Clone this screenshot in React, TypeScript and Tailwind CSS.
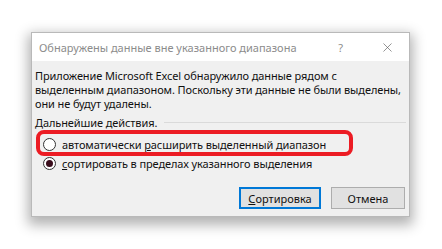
import { X } from 'lucide-react';

function Radio({ checked }: { checked?: boolean }) {
  return (
    <span className="w-[13px] h-[13px] rounded-full border border-[#333] bg-white flex items-center justify-center flex-shrink-0">
      {checked && <span className="w-[7px] h-[7px] rounded-full bg-[#3a0d1c]" />}
    </span>
  );
}

export default function App() {
  return (
    <div
      className="w-[442px] h-[249px] bg-white pt-[32px] pl-[31px] text-[11px] leading-[13px] text-[#111]"
      style={{ fontFamily: '"Noto Sans", "Open Sans", sans-serif' }}
    >
      <div className="w-[379px] h-[185px] border border-[#b9b9b9] bg-[#f0f0f0] shadow-[0_5px_12px_3px_rgba(0,0,0,0.3)] flex flex-col">
        <div className="h-[28px] bg-white flex items-center pl-[7px] pr-[14px] text-[#8c8c8c] flex-shrink-0">
          <span className="flex-1 whitespace-nowrap">Обнаружены данные вне указанного диапазона</span>
          <span className="mr-[37px]">?</span>
          <X size={15} strokeWidth={1} className="text-[#555]" />
        </div>

        <div className="pl-[3px] pt-[8px] tracking-[-0.1px]">
          <div className="leading-[14px]">
            <p className="whitespace-nowrap">Приложение Microsoft Excel обнаружило данные рядом с</p>
            <p className="whitespace-nowrap">выделенным диапазоном. Поскольку эти данные не были выделены,</p>
            <p className="whitespace-nowrap">они не будут удалены.</p>
          </div>

          <div className="mt-[5px] flex items-center gap-[7px] pr-[3px]">
            <span className="whitespace-nowrap">Дальнейшие действия.</span>
            <span className="flex-1 h-px bg-[#dadada]" />
          </div>

          <div className="relative mt-[6px] h-[18px] pl-[8px] flex items-center gap-[6px]">
            <span className="absolute left-[1px] top-[-5px] w-[317px] h-[26px] border-4 border-[#ec1c24] rounded-[8px]" />
            <Radio />
            <span className="whitespace-nowrap">
              автоматически <span className="underline">р</span>асширить выделенный диапазон
            </span>
          </div>

          <div className="mt-[1px] h-[18px] pl-[8px] flex items-center gap-[6px]">
            <Radio checked />
            <span className="whitespace-nowrap">
              <span className="underline">с</span>ортировать в пределах указанного выделения
            </span>
          </div>
        </div>

        <div className="flex justify-end gap-[10px] pr-[4px] mt-[15px]">
          <button className="w-[82px] h-[22px] border-2 border-[#0078d7] bg-[#e1e1e1] flex items-center justify-center">
            <span>
              <span className="underline">С</span>ортировка
            </span>
          </button>
          <button className="w-[74px] h-[22px] border border-[#adadad] bg-[#e1e1e1] flex items-center justify-center">
            Отмена
          </button>
        </div>
      </div>
    </div>
  );
}
